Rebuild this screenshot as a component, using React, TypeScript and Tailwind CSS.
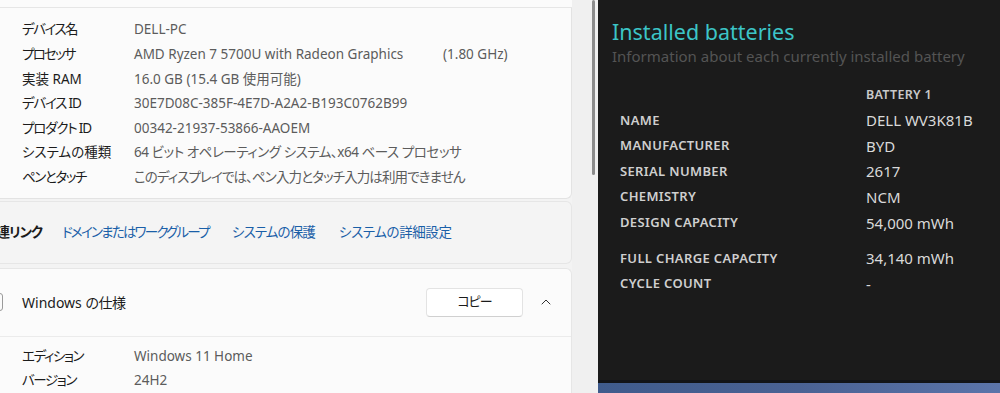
import React from "react";
import { ChevronUp } from "lucide-react";

const jp = "font-['Noto_Sans','Noto_Sans_CJK_JP',sans-serif] [font-feature-settings:'palt']";

const specs: { k: string; kt: string; v: string; vt: string; extra?: string }[] = [
  { k: "デバイス名", kt: "tracking-[-1.5px]", v: "DELL-PC", vt: "" },
  { k: "プロセッサ", kt: "tracking-[-1.8px]", v: "AMD Ryzen 7 5700U with Radeon Graphics", vt: "", extra: "(1.80 GHz)" },
  { k: "実装 RAM", kt: "", v: "16.0 GB (15.4 GB 使用可能)", vt: "" },
  { k: "デバイス ID", kt: "tracking-[-1.2px]", v: "30E7D08C-385F-4E7D-A2A2-B193C0762B99", vt: "" },
  { k: "プロダクト ID", kt: "tracking-[-1.2px]", v: "00342-21937-53866-AAOEM", vt: "" },
  { k: "システムの種類", kt: "", v: "64 ビット オペレーティング システム、x64 ベース プロセッサ", vt: "tracking-[-0.45px]" },
  { k: "ペンとタッチ", kt: "tracking-[-1.4px]", v: "このディスプレイでは、ペン入力とタッチ入力は利用できません", vt: "tracking-[-0.9px]" },
];

const battery: [string, string, boolean?][] = [
  ["NAME", "DELL WV3K81B"],
  ["MANUFACTURER", "BYD"],
  ["SERIAL NUMBER", "2617"],
  ["CHEMISTRY", "NCM"],
  ["DESIGN CAPACITY", "54,000 mWh"],
  ["FULL CHARGE CAPACITY", "34,140 mWh", true],
  ["CYCLE COUNT", "-"],
];

export default function App() {
  return (
    <div className={`flex h-[393px] w-[1000px] overflow-hidden bg-[#f3f3f3] ${jp}`}>
      {/* Left settings pane */}
      <div className="flex w-[598px] shrink-0">
        <div className="flex w-[572px] shrink-0 flex-col">
          <div className="h-[8px] border-b border-[#e6e6e6] bg-[#fbfbfb]" />
          <div className="rounded-br-[6px] border-r border-b border-[#e3e3e3] bg-[#fbfbfb] pt-[9px] pb-[8px]">
            {specs.map((s) => (
              <div key={s.k} className="flex h-[24.67px] items-center text-[13.5px]">
                <div className={`w-[134px] shrink-0 whitespace-nowrap pl-[22px] text-[#1b1b1b] ${s.kt}`}>{s.k}</div>
                <div className={`w-[309px] shrink-0 whitespace-nowrap text-[#5c5c5c] ${s.vt}`}>{s.v}</div>
                {s.extra && <div className="whitespace-nowrap text-[#5c5c5c]">{s.extra}</div>}
              </div>
            ))}
          </div>
          <div className="mt-[2px] flex h-[63px] items-center rounded-r-[6px] border-y border-r border-[#e6e6e6] bg-[#f4f4f4] text-[13.5px]">
            <div className="ml-[-16px] w-[78px] shrink-0 whitespace-nowrap font-bold tracking-[-1px] text-[#1b1b1b]">関連リンク</div>
            <div className="w-[170px] shrink-0 whitespace-nowrap tracking-[-1.8px] text-[#1a5fa8]">ドメインまたはワークグループ</div>
            <div className="w-[107px] shrink-0 whitespace-nowrap tracking-[-0.9px] text-[#1a5fa8]">システムの保護</div>
            <div className="whitespace-nowrap tracking-[-0.4px] text-[#1a5fa8]">システムの詳細設定</div>
          </div>
          <div className="mt-[4px] flex-1 rounded-tr-[6px] border-t border-r border-[#e6e6e6] bg-[#fbfbfb]">
            <div className="flex h-[68px] items-center border-b border-[#ebebeb]">
              <div className="ml-[-14px] h-[18px] w-[17px] shrink-0 rounded-[3px] border border-[#9a9a9a]" />
              <div className="ml-[19px] text-[14px] text-[#1b1b1b]">
                Windows <span className="tracking-[-0.5px]">の仕様</span>
              </div>
              <div className="ml-auto flex h-[29px] w-[97px] items-center justify-center rounded-[4px] border border-[#e3e3e3] border-b-[#d0d0d0] bg-white text-[13px] tracking-[-1px] text-[#1b1b1b]">
                コピー
              </div>
              <div className="ml-[15px] mr-[17px] flex w-[16px] justify-center text-[#333]">
                <ChevronUp size={16} strokeWidth={1.5} />
              </div>
            </div>
            <div className="pt-[8px]">
              {[
                ["エディション", "Windows 11 Home"],
                ["バージョン", "24H2"],
              ].map(([k, v]) => (
                <div key={k} className="flex h-[24px] items-center text-[13.5px]">
                  <div className="w-[134px] shrink-0 whitespace-nowrap pl-[22px] tracking-[-1.4px] text-[#1b1b1b]">{k}</div>
                  <div className="whitespace-nowrap text-[#5c5c5c]">{v}</div>
                </div>
              ))}
            </div>
          </div>
        </div>
        <div className="flex-1 bg-[#f0f0f0] pl-[20px]">
          <div className="h-[175px] w-[3px] rounded-full bg-[#8c8c8c]" />
        </div>
      </div>

      {/* Right battery report pane */}
      <div className="flex flex-1 flex-col font-['Noto_Sans',sans-serif]">
        <div className="h-[380px] bg-[#1b1b1b] pl-[14px]">
          <div className="pt-[16px] text-[21.5px] leading-[32px] text-[#3cc5c7]">Installed batteries</div>
          <div className="mt-[-3px] text-[15px] leading-[22px] text-[#545454]">Information about each currently installed battery</div>
          <div className="mt-[16px] pl-[8px]">
            <div className="grid h-[24.6px] grid-cols-[246px_1fr] items-center">
              <div />
              <div className="text-[12.5px] font-semibold tracking-[0.3px] text-[#c9c9c9]">BATTERY 1</div>
            </div>
            {battery.map(([k, v, gap]) => (
              <div key={k} className={`grid h-[25.6px] grid-cols-[246px_1fr] items-center ${gap ? "mt-[10px]" : ""}`}>
                <div className="text-[13px] font-semibold tracking-[0.35px] text-[#cfcfcf]">{k}</div>
                <div className="text-[15px] text-[#d9d9d9]">{v}</div>
              </div>
            ))}
          </div>
        </div>
        <div className="h-[3px] bg-[#121418]" />
        <div className="flex-1 bg-gradient-to-r from-[#3f5b8c] via-[#4a6294] to-[#5a74aa]" />
      </div>
    </div>
  );
}
